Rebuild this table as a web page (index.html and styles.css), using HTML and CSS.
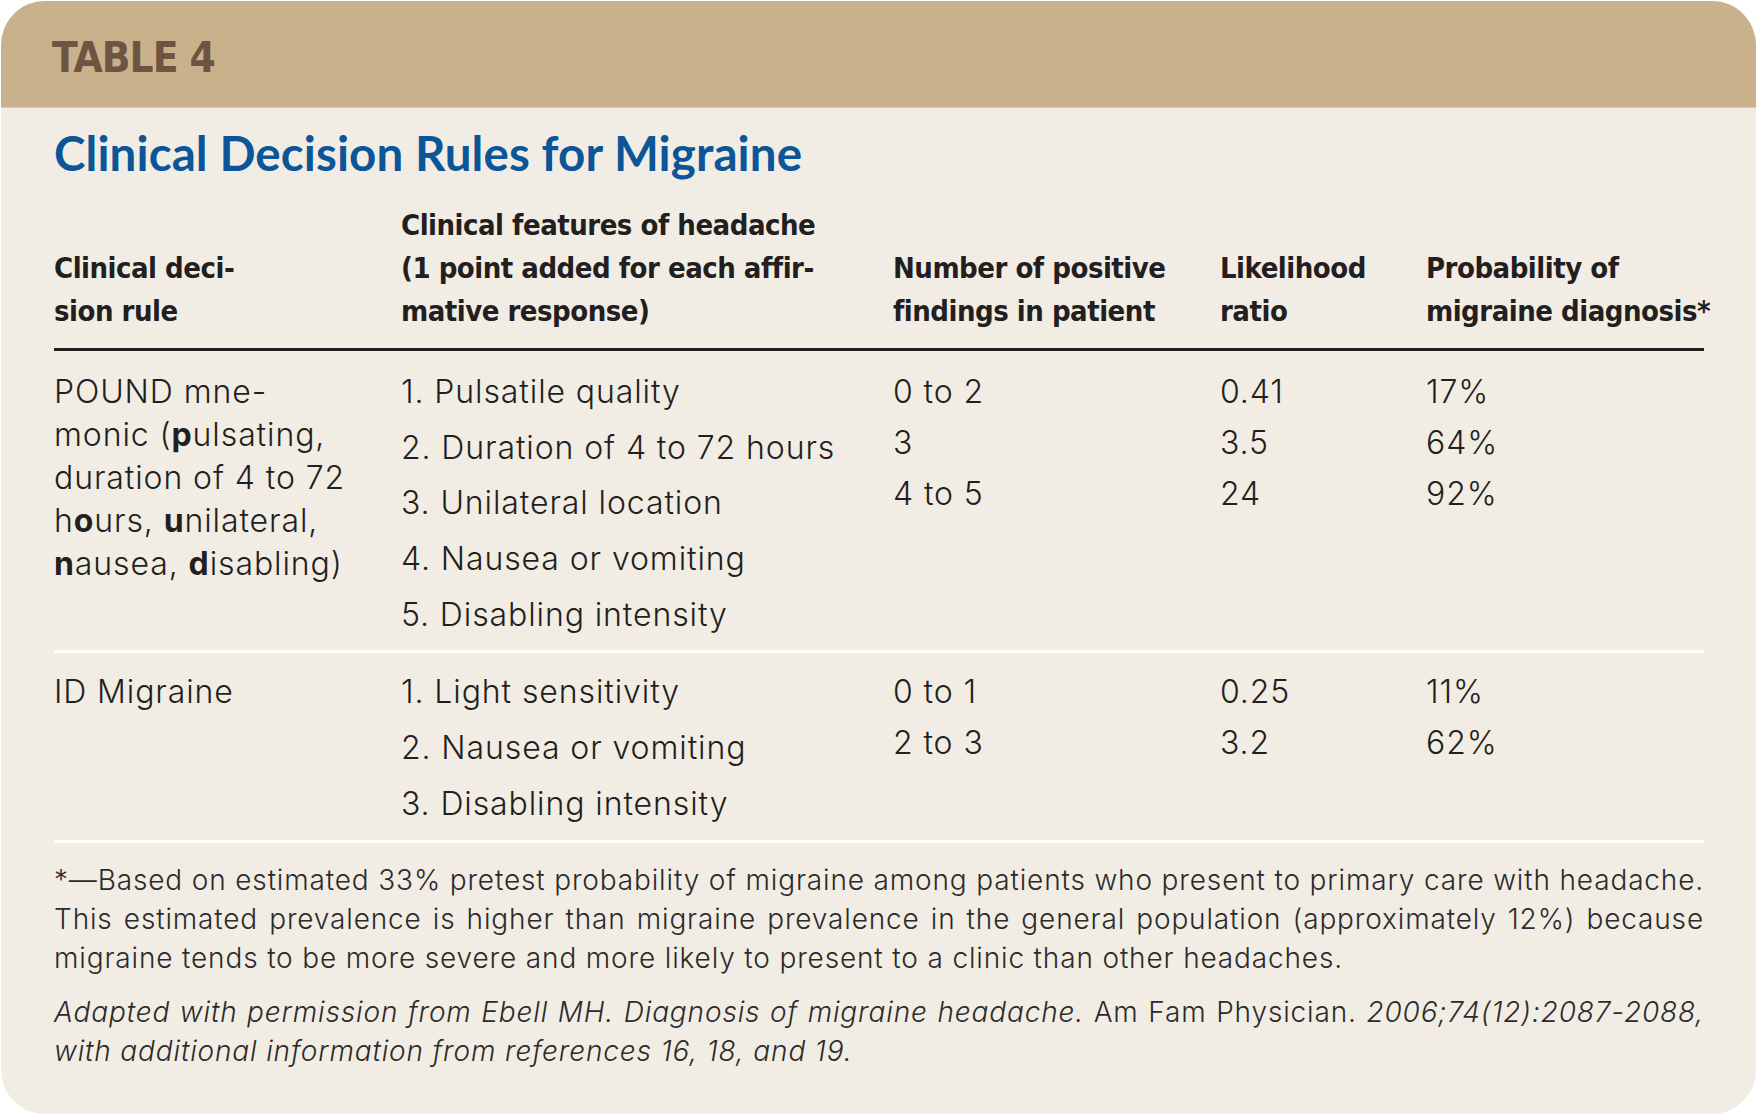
FILE: index.html
```html
<!DOCTYPE html>
<html lang="en">
<head>
<meta charset="utf-8">
<title>Table 4 – Clinical Decision Rules for Migraine</title>
<link rel="stylesheet" href="styles.css">
</head>
<body>
<div class="card">
  <div class="band"><span class="label">TABLE 4</span></div>
  <div class="content">
    <h1 class="title">Clinical Decision Rules for Migraine</h1>
    <div class="table">
      <div class="th">Clinical deci-<br>sion rule</div>
      <div class="th">Clinical features of headache<br>(1 point added for each affir-<br>mative response)</div>
      <div class="th">Number of positive<br>findings in patient</div>
      <div class="th">Likelihood<br>ratio</div>
      <div class="th">Probability of<br>migraine diagnosis*</div>
      <div class="rule"></div>

      <div class="td r1 name">POUND mne-<br>monic (<b>p</b>ulsating,<br>duration of 4 to 72<br>h<b>o</b>urs, <b>u</b>nilateral,<br><b>n</b>ausea, <b>d</b>isabling)</div>
      <div class="td r1 list features">
        <div>1. Pulsatile quality</div>
        <div>2. Duration of 4 to 72 hours</div>
        <div>3. Unilateral location</div>
        <div>4. Nausea or vomiting</div>
        <div>5. Disabling intensity</div>
      </div>
      <div class="td r1 list nums">
        <div>0 to 2</div>
        <div>3</div>
        <div>4 to 5</div>
      </div>
      <div class="td r1 list nums">
        <div>0.41</div>
        <div>3.5</div>
        <div>24</div>
      </div>
      <div class="td r1 list nums">
        <div>17%</div>
        <div>64%</div>
        <div>92%</div>
      </div>
      <div class="sep"></div>

      <div class="td r2 name">ID Migraine</div>
      <div class="td r2 list features">
        <div>1. Light sensitivity</div>
        <div>2. Nausea or vomiting</div>
        <div>3. Disabling intensity</div>
      </div>
      <div class="td r2 list nums">
        <div>0 to 1</div>
        <div>2 to 3</div>
      </div>
      <div class="td r2 list nums">
        <div>0.25</div>
        <div>3.2</div>
      </div>
      <div class="td r2 list nums">
        <div>11%</div>
        <div>62%</div>
      </div>
      <div class="sep"></div>
    </div>

    <p class="note">
      <span class="jl">*—Based on estimated 33% pretest probability of migraine among patients who present to primary care with headache.</span>
      <span class="jl">This estimated prevalence is higher than migraine prevalence in the general population (approximately 12%) because</span>
      <span class="ll">migraine tends to be more severe and more likely to present to a clinic than other headaches.</span>
    </p>
    <p class="note source">
      <span class="jl"><i>Adapted with permission from Ebell MH. Diagnosis of migraine headache.</i> Am Fam Physician. <i>2006;74(12):2087-2088,</i></span>
      <span class="ll"><i>with additional information from references 16, 18, and 19.</i></span>
    </p>
  </div>
</div>
</body>
</html>
```

FILE: styles.css
```css
html, body {
  margin: 0;
  padding: 0;
  background: #ffffff;
}

.card {
  margin: 1px 1px 0 1px;
  height: 1113px;
  background: #f2ede4;
  border-radius: 44px;
  overflow: hidden;
}

.band {
  height: 107px;
  box-sizing: border-box;
  background: #c9b18b;
  border-bottom: 1px solid #dccbac;
  padding: 36px 0 0 51px;
}

.label {
  display: block;
  font-family: "DejaVu Sans Condensed", "DejaVu Sans", sans-serif;
  font-weight: bold;
  font-size: 42px;
  line-height: 42px;
  color: #6d5443;
  letter-spacing: -1px;
}

.content {
  padding: 0 52px 0 53px;
}

.title {
  margin: 17px 0 0 0;
  font-family: Lato, "Liberation Sans", sans-serif;
  font-weight: 700;
  font-size: 47.5px;
  line-height: 56px;
  letter-spacing: 0.1px;
  color: #0b5598;
}

.table {
  margin-top: 23px;
  display: grid;
  grid-template-columns: 347px 492px 327px 206px 278px;
  color: #231f20;
}

.th {
  align-self: end;
  min-width: 0;
  padding-bottom: 15px;
  font-family: "DejaVu Sans Condensed", "DejaVu Sans", sans-serif;
  font-weight: bold;
  font-size: 29px;
  line-height: 43px;
  letter-spacing: -0.5px;
  white-space: nowrap;
}

.rule {
  grid-column: 1 / -1;
  height: 3px;
  background: #231f20;
}

.sep {
  grid-column: 1 / -1;
  height: 3px;
  background: #fefdfb;
}

.td {
  font-family: Inter, "Open Sans", sans-serif;
  font-weight: 300;
  font-size: 32px;
  line-height: 43px;
  letter-spacing: 0.9px;
}

.td b {
  font-weight: 700;
}

.r1 {
  padding: 19px 0 14px 0;
}

.r2 {
  padding: 17px 0 15px 0;
}

.list {
  display: flex;
  flex-direction: column;
}

.features {
  gap: 12.7px;
}

.r2.features {
  gap: 13.3px;
}

.nums {
  gap: 8px;
}

.r2.nums {
  gap: 8.5px;
}

.note {
  margin: 18px 0 0 0;
  font-family: Inter, "Open Sans", sans-serif;
  font-weight: 300;
  font-size: 28px;
  line-height: 38.7px;
  letter-spacing: 0.85px;
  color: #2b2b2b;
}

.note.source {
  margin-top: 16px;
}

.jl {
  display: block;
  white-space: nowrap;
  text-align: justify;
  text-align-last: justify;
}

.ll {
  display: block;
  white-space: nowrap;
}
```
